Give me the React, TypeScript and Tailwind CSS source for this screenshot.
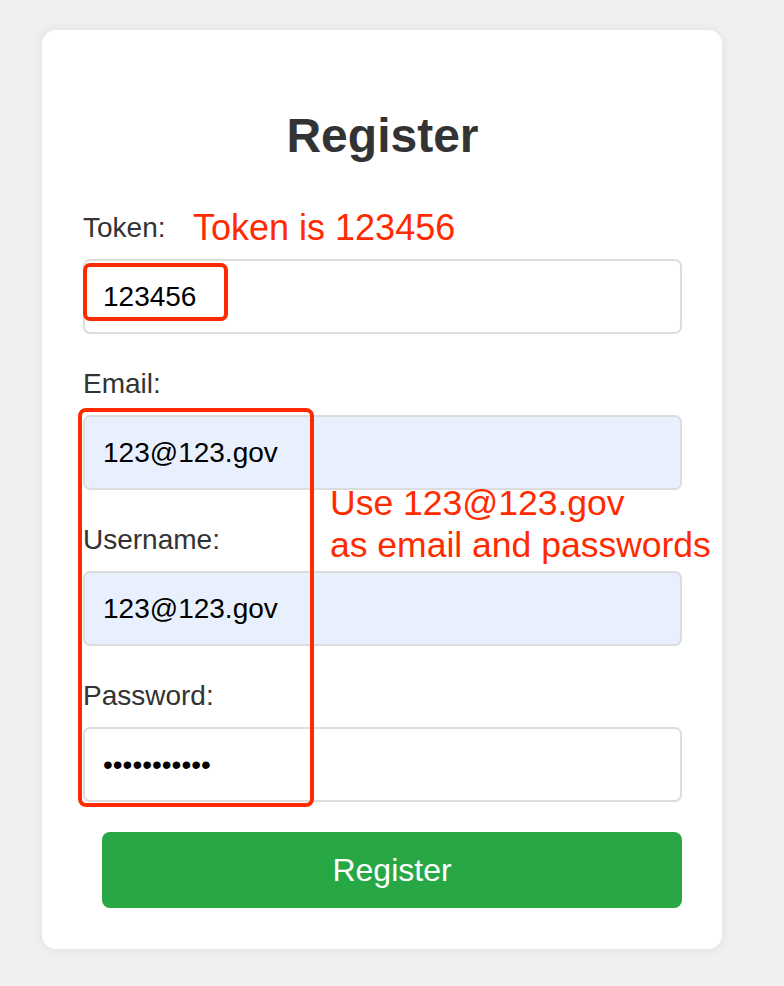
import React from "react";

const fields = [
    { label: "Token:", value: "123456", type: "text", filled: false },
    { label: "Email:", value: "123@123.gov", type: "text", filled: true },
    { label: "Username:", value: "123@123.gov", type: "text", filled: true },
    { label: "Password:", value: "123@123.gov", type: "password", filled: false },
];

function Field(props: { label: string; value: string; type: string; filled: boolean }) {
    return (
        <div className="flex flex-col">
            <label className="text-[28px] leading-[32px] text-[#333] mb-[15px]">{props.label}</label>
            <input
                readOnly
                type={props.type}
                value={props.value}
                className={
                    "h-[75px] w-full border-2 border-[#dddddd] rounded-[7px] pl-[18px] text-[28px] text-black outline-none " +
                    (props.filled ? "bg-[#e8f0fe]" : "bg-white")
                }
                style={{ fontFamily: "inherit" }}
            />
        </div>
    );
}

export default function App() {
    return (
        <main
            className="min-h-screen bg-[#f0f0f0] pt-[30px] pl-[42px]"
            style={{ fontFamily: "'Liberation Sans', Arial, sans-serif" }}
        >
            <div className="relative w-[680px] bg-white rounded-[14px] shadow-[0_0_12px_rgba(0,0,0,0.08)] pt-[82px] pb-[41px] pl-[41px] pr-[40px]">
                <h1 className="text-center text-[48px] leading-[48px] font-bold text-[#333] mb-[52px]">Register</h1>

                <div className="flex flex-col gap-[34px]">
                    {fields.map((f, i) => (
                        <Field key={i} label={f.label} value={f.value} type={f.type} filled={f.filled} />
                    ))}
                </div>

                <button className="mt-[30px] ml-[19px] w-[580px] h-[76px] bg-[#28a745] rounded-[8px] text-white text-[32px]">
                    Register
                </button>

                {/* red annotations drawn over the form */}
                <div className="absolute left-[151px] top-[178px] text-[36px] leading-[40px] text-[#ff2a00] whitespace-nowrap">
                    Token is 123456
                </div>
                <div className="absolute left-[41px] top-[233px] w-[145px] h-[58px] border-4 border-[#ff2a00] rounded-[7px]" />
                <div className="absolute left-[36px] top-[378px] w-[236px] h-[399px] border-4 border-[#ff2a00] rounded-[8px]" />
                <div className="absolute left-[288px] top-[452px] text-[35.5px] leading-[42px] text-[#ff2a00] whitespace-nowrap">
                    Use 123@123.gov
                    <br />
                    as email and passwords
                </div>
            </div>
        </main>
    );
}
